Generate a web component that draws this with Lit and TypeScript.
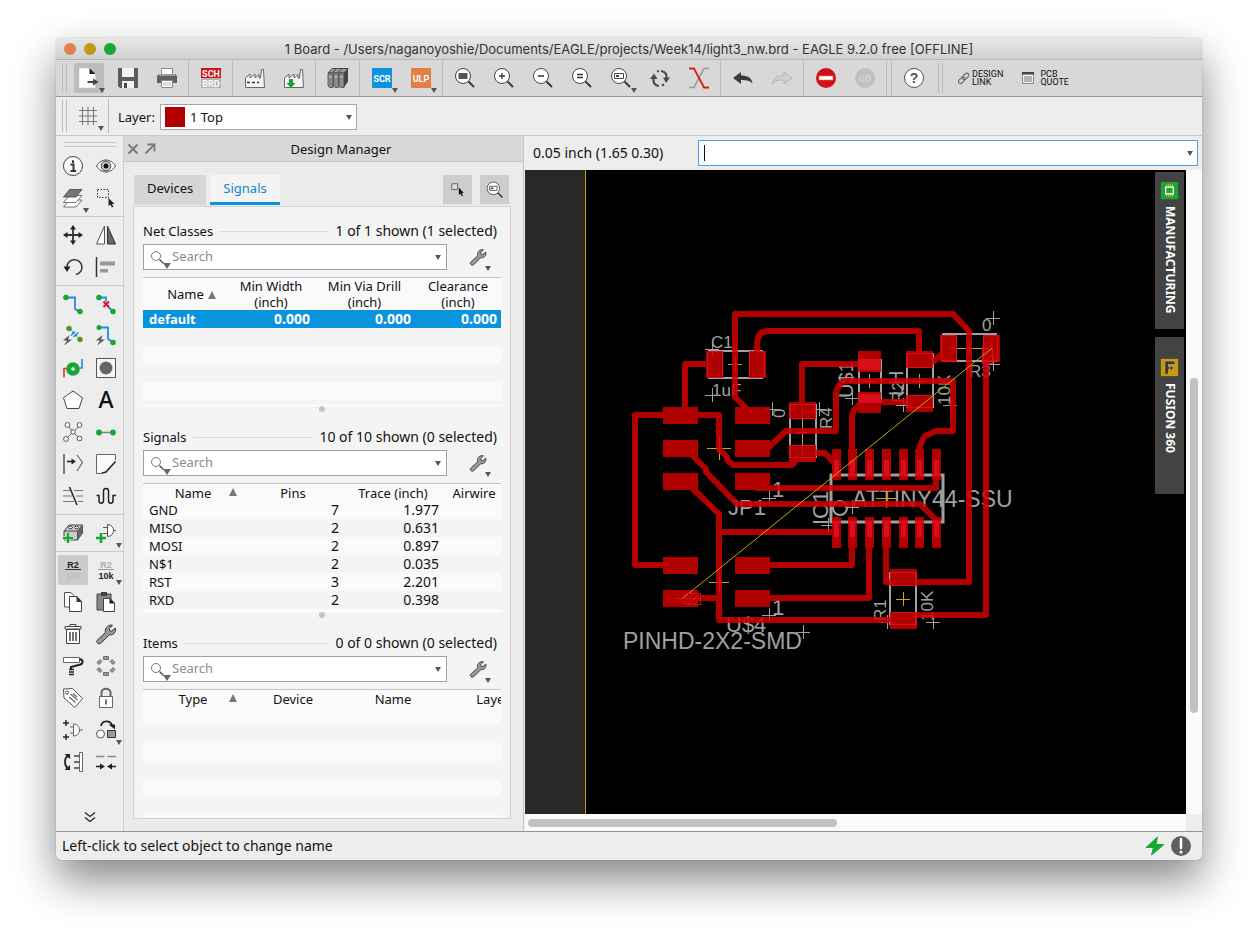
import { LitElement, html, svg, css, nothing } from "lit";
import type { TemplateResult } from "lit";
import { customElement, property } from "lit/decorators.js";
import { classMap } from "lit/directives/class-map.js";

/* ---------- icon set, drawn on a 24 unit grid ---------- */

const lens = (inner: unknown) => svg`
  <circle cx="10" cy="10" r="7.5" fill="#fff" stroke="#444" stroke-width="1"/>
  <path d="M15.500 15.500L21 21" stroke="#333" stroke-width="1.800"/>
  ${inner}`;

const wrench = svg`
  <path d="M3 18.500l8.500-8c-.8-3.500 1.200-7 5.500-7.500l1.500.3-3.200 3.400.4 2 2 .5 3.500-3.200.4 1.200c0 4-3 6.300-6.300 5.600L7.200 21c-1.300 1.200-2.600 1-3.500.2-1-.8-1.500-1.700-.7-2.700z"
    fill="#999" stroke="#333" stroke-width="1"/>`;

const factory = svg`
  <path d="M2.500 21.500V12l4.500-4v4l5-4v4l4-3.500V12h1.500L18.500 3.500h2L21.500 21.500z" fill="#f4f4f4" stroke="#666"/>`;

const ICONS: Record<string, unknown> = {
  open: svg`
    <path d="M2.500 2.500H13L18 8V21.500H2.500z" fill="#fff" stroke="#eee"/>
    <path d="M12.500 2l6 6h-6z" fill="#222"/>
    <path d="M10.500 16h8" stroke="#444" stroke-width="2"/><path d="M16 12.500l5.500 3.500-5.500 3.500z" fill="#444"/>`,
  save: svg`
    <path d="M2 2h20v20H4l-2-2z" fill="#5c5c5c"/><path d="M6 2h12v9H6z" fill="#f3f3f3"/>
    <path d="M6 15h12v7H6z" fill="#f3f3f3"/><path d="M8 17h3v5H8z" fill="#444"/>`,
  print: svg`
    <path d="M6.500 2.500h11v6h-11z" fill="#fff" stroke="#888"/>
    <path d="M4 8h16l2 2v7H2v-7z" fill="#606060"/><path d="M4 8h16v2H4z" fill="#999"/>
    <path d="M6.500 14.500h11v7h-11z" fill="#fff" stroke="#888"/><path d="M8 17h8M8 19h8" stroke="#bbb"/>`,
  sch: svg`
    <path d="M2 2h20v10H2z" fill="#d2101a"/><path d="M2 12h20v10H2z" fill="#b4b4b4"/>
    <text x="12" y="10.500" class="badge">SCH</text><text x="12" y="21" class="badge">BRD</text>`,
  cam: svg`${factory}<path d="M4 16.500h12" stroke="#333" stroke-width="1.500" stroke-dasharray="3 2"/>`,
  mfg: svg`${factory}<path d="M7 13h4v4h2.500L9 22l-4.500-5H7z" fill="#17a535"/>`,
  books: svg`
    <path d="M2 7l4-4.500h16L18 7z" fill="#999" stroke="#444"/>
    <path d="M18 7l4-4.500v13L18 21.500z" fill="#444"/>
    <path d="M2 7h5v14.500H3.500L2 20zM7.500 7h5v14.500H9L7.500 20zM13 7h5v14.500h-3.500L13 20z" fill="#8a8a8a" stroke="#4c4c4c" stroke-width=".8"/>
    <path d="M3 11h3M8.500 11h3M14 11h3" stroke="#ccc"/><path d="M7 6l4-4M12.500 6l4-4" stroke="#444"/>`,
  scr: svg`<path d="M2 2h20v20H2z" fill="#0f93de"/><text x="12" y="15.500" class="badge">SCR</text>`,
  ulp: svg`<path d="M2 2h20v20H2z" fill="#e47e45"/><text x="12" y="15.500" class="badge">ULP</text>`,
  fit: lens(svg`<path d="M5.500 7h9v6h-9z" fill="#555"/>`),
  zin: lens(svg`<path d="M7 10h6M10 7v6" stroke="#333" stroke-width="1.300"/>`),
  zout: lens(svg`<path d="M7 10h6" stroke="#333" stroke-width="1.300"/>`),
  zeq: lens(svg`<path d="M7 8.500h6M7 11.500h6" stroke="#333" stroke-width="1.300"/>`),
  zsel: lens(svg`<path d="M5.500 7.500h9v5h-9z" fill="none" stroke="#444"/><path d="M7 9h3v2H7z" fill="#444"/>`),
  redraw: svg`
    <path d="M13 5c4.500.5 6 3.500 5.500 7M11 20c-4.500-.5-6-3.500-5.500-7" fill="none" stroke="#4a4a4a" stroke-width="2.200"/>
    <path d="M15 11.500h7l-4 5.500z" fill="#4a4a4a"/><path d="M2 13h7.500L6 7.500z" fill="#4a4a4a"/>
    <path d="M9 5.500l2-.5M14 19.500l2-1" stroke="#4a4a4a" stroke-width="2"/>`,
  stackup: svg`
    <path d="M2 21.500h5L17 2.500h5" fill="none" stroke="#999" stroke-width="1.600"/>
    <path d="M2 2.500h5L17 21.500h5" fill="none" stroke="#e01c10" stroke-width="1.800"/>`,
  undo: svg`<path d="M2 12l8-6v3.500c6 0 11 2 11.500 8-2.500-3-6-3.600-11.500-3.500V18z" fill="#3a3a3a"/>`,
  redo: svg`<path d="M22 12l-8-6v3.500c-6 0-11 2-11.500 8 2.500-3 6-3.600 11.500-3.500V18z" fill="#cfcfcf" stroke="#b4b4b4"/>`,
  stop: svg`<circle cx="12" cy="12" r="10" fill="#d0101c"/><path d="M5 10h14v4H5z" fill="#fff" stroke="#e2803a" stroke-width=".6"/>`,
  go: svg`<circle cx="12" cy="12" r="10" fill="#c0c0c0"/><text x="12" y="15.500" class="badge dim">GO</text>`,
  help: svg`<circle cx="12" cy="12" r="9.500" fill="#fff" stroke="#555"/><text x="12" y="17" class="ask">?</text>`,
  link: svg`
    <g fill="none" stroke="#666" stroke-width="1.100" transform="rotate(-45 12 12)">
    <rect x="5" y="10" width="7.500" height="4" rx="2"/><rect x="10.500" y="10" width="7.500" height="4" rx="2"/></g>`,
  quote: svg`
    <path d="M6.500 6.500h11v11h-11z" fill="#eee" stroke="#888"/><path d="M6 6h12v2.500H6z" fill="#444"/>
    <path d="M8 11h8M8 13h8M8 15h8" stroke="#777"/>`,
  grid: svg`<path d="M6.500 3v18M12 3v18M17.500 3v18M3 6.500h18M3 12h18M3 17.500h18" stroke="#777" stroke-width="1"/>`,

  info: svg`<circle cx="12" cy="12" r="9.500" fill="#fafafa" stroke="#444"/>
    <path d="M12 6.300v2.600M9.500 10.500h3v6M9.500 17h5.500" stroke="#333" stroke-width="2" fill="none"/>`,
  eye: svg`<path d="M2.500 12c5-8 14-8 19 0-5 8-14 8-19 0z" fill="#fff" stroke="#444"/>
    <circle cx="12" cy="12" r="4.800" fill="#ccc" stroke="#444"/><circle cx="12" cy="12" r="2.500" fill="#111"/>`,
  layers: svg`<g stroke="#555" stroke-width=".8">
    <path d="M2.500 21l6-7H21l-6 7z" fill="#fff"/><path d="M2.500 16.500l6-7H21l-6 7z" fill="#fff"/><path d="M2.500 11l6-7.500H21L15 11z" fill="#777" stroke="#444"/></g>`,
  group: svg`<path d="M3.500 3.500h11v8h-11z" fill="none" stroke="#333" stroke-dasharray="1.500 1.500"/>
    <path d="M14.500 12v8l2-1.500 1.300 3 1.500-.7-1.300-2.800h2.500z" fill="#222"/>`,
  move: svg`<path d="M12 4v16M4 12h16" stroke="#333" stroke-width="1.800"/>
    <path d="M12 2l3 4.500H9zM12 22l3-4.500H9zM2 12l4.500-3v6zM22 12l-4.500-3v6z" fill="#222"/>`,
  mirror: svg`<path d="M10.500 3v18h-8z" fill="#fff" stroke="#555"/><path d="M13.500 3v18h8z" fill="#666" stroke="#333"/>`,
  rotate: svg`<path d="M6 13a7.500 7.500 0 1 1 9 6.500" fill="none" stroke="#333" stroke-width="1.500"/><path d="M2.500 11.500h7L6 17z" fill="#222"/>`,
  align: svg`<path d="M2.500 2v20" stroke="#333" stroke-width="1.500"/><path d="M6 6.500h15v4H6zM6 14h8v3.500H6z" fill="#999"/>`,
  route: svg`<path d="M5 5.500h9V17l5 3" fill="none" stroke="#1b8fdf" stroke-width="1.800"/>
    <circle cx="5" cy="5.500" r="2.800" fill="#17a535"/><circle cx="19" cy="19.500" r="2.800" fill="#17a535"/>`,
  ripup: svg`<path d="M5 5.500h7v4M14 15l5 4" fill="none" stroke="#1b8fdf" stroke-width="1.800"/>
    <circle cx="5" cy="5.500" r="2.800" fill="#17a535"/><circle cx="19" cy="19.500" r="2.800" fill="#17a535"/>
    <path d="M9.500 9.500l5.500 5.500M15 9.500L9.500 15" stroke="#d8141c" stroke-width="2"/>`,
  autoroute: svg`<path d="M8.500 4.500l10 10.500" stroke="#1b8fdf" stroke-width="1.500" stroke-dasharray="3 1"/>
    <path d="M10 11.500l4-4M12.500 13l5-4.500" stroke="#1b8fdf" stroke-width="1.600"/>
    <circle cx="8" cy="4.500" r="2.500" fill="#17a535" stroke="#c08a20" stroke-width=".8"/><circle cx="19" cy="15.500" r="2.500" fill="#17a535" stroke="#c08a20" stroke-width=".8"/>
    <path d="M8.500 11L2 16.500h4l-3 5 8-6H7z" fill="#555"/>`,
  quickroute: svg`<path d="M5 3.500h9V15l5 3" fill="none" stroke="#1b8fdf" stroke-width="1.800"/>
    <circle cx="5" cy="3.500" r="2.500" fill="#17a535"/><circle cx="19" cy="18.500" r="2.800" fill="#17a535"/>
    <path d="M8.500 11L2 16.500h4l-3 5 8-6H7z" fill="#555"/>`,
  via: svg`<path d="M3 21.500v-9h5" fill="none" stroke="#e2361c" stroke-width="1.600"/><path d="M21 3v9h-5" fill="none" stroke="#1b8fdf" stroke-width="1.600"/>
    <circle cx="12" cy="13" r="4.300" fill="#fff" stroke="#17a535" stroke-width="5"/>`,
  hole: svg`<path d="M2.500 2.500h19v19h-19z" fill="#f6f6f6" stroke="#555"/><circle cx="12" cy="12" r="6.500" fill="#666"/>`,
  polygon: svg`<path d="M12 3l9.500 6.800L18 20.500H6L2.500 9.800z" fill="#fff" stroke="#444"/>`,
  text: svg`<text x="12" y="20" class="big-a">A</text>`,
  ratsnest: svg`<path d="M7 5.500l5 6.500 6.500-6M5 19l7-7 6.500 6.500" fill="none" stroke="#666"/>
    <g fill="#fff" stroke="#555"><circle cx="6.500" cy="5" r="2.400"/><circle cx="18.500" cy="5" r="2.400"/><circle cx="5" cy="19" r="2.400"/><circle cx="18.500" cy="18.500" r="2.400"/><circle cx="12" cy="12" r="2.200"/></g>`,
  airwire: svg`<path d="M5 12.500h14" stroke="#888" stroke-width="1.600"/><circle cx="5" cy="12.500" r="2.900" fill="#17a535"/><circle cx="19" cy="12.500" r="2.900" fill="#17a535"/>`,
  split: svg`<path d="M3 2v20" stroke="#333" stroke-width="1.200"/><path d="M6 9.500h6" stroke="#222" stroke-width="1.600"/><path d="M10.500 6.500l4.500 3-4.500 3z" fill="#222"/>
    <path d="M16 3l5.500 7.500L16 19" fill="none" stroke="#666" stroke-width="1.200"/>`,
  miter: svg`<path d="M21.500 8V2.500h-19v19H8" fill="#fafafa" stroke="#666"/><path d="M8 21l4-1 9.500-10.500" fill="none" stroke="#222" stroke-width="1.500"/>`,
  fanout: svg`<path d="M2 6.500h7M13 6.500h9M2 12h9M15 12h7M2 17.500h11M17 17.500h5" stroke="#777"/><path d="M8.500 3l7.500 18" stroke="#222" stroke-width="1.500"/>`,
  meander: svg`<path d="M2.500 11.500h2.500v5c0 3.500 4.500 3.500 4.500 0V7c0-3.500 5-3.500 5 0v9.500c0 3.500 4.500 3.500 4.500 0v-5H22" fill="none" stroke="#222" stroke-width="1.500"/>`,
  addpart: svg`<path d="M3 10l5-6h13.500v8l-5 7H3z" fill="#ccc" stroke="#444"/><path d="M3 10h13.500l5-6M16.500 10v9" fill="none" stroke="#444"/>
    <path d="M16.500 10l5-6v8l-5 7z" fill="#666"/><ellipse cx="9.500" cy="6.500" rx="2" ry="1.200" fill="#eee" stroke="#444"/><ellipse cx="15.500" cy="6.500" rx="2" ry="1.200" fill="#eee" stroke="#444"/>
    <path d="M7 12v10M2 17h10" stroke="#fff" stroke-width="3.500"/><path d="M7 12v10M2 17h10" stroke="#17a535" stroke-width="2.600"/>`,
  addgate: svg`<path d="M13.500 3.500c8 0 8 12 0 12zM9 6.500h4M9 12.500h4M19.500 9.500H22" fill="#fff" stroke="#555"/>
    <path d="M7 12v10M2 17h10" stroke="#17a535" stroke-width="2.600"/>`,
  name: svg`<text x="12" y="10" class="r2">R2</text><path d="M4 11.500h16" stroke="#333"/><text x="12" y="20.500" class="r2 faint">10k</text>`,
  value: svg`<text x="12" y="10" class="r2 pale">R2</text><path d="M4 11.500h16" stroke="#999"/><text x="12" y="20.500" class="r2">10k</text>`,
  copy: svg`<path d="M3.500 2.500H10l2.500 3V17h-9z" fill="#fff" stroke="#555"/><path d="M8.500 6.500H16l4.500 5v10h-12z" fill="#fff" stroke="#444"/><path d="M15.500 6l5.500 6h-5.500z" fill="#333"/>`,
  paste: svg`<path d="M3 4h14v16H3z" fill="#888" stroke="#444"/><path d="M7 2h6v4H7z" fill="#444"/><path d="M9.500 8.500H16l4.500 4.500v8.500h-11z" fill="#fff" stroke="#444"/><path d="M15.500 8l5.500 5.500h-5.500z" fill="#222"/>`,
  trash: svg`<path d="M5.500 7.500h13v14h-13zM4 4.500h16v2.500H4zM9 4.500v-2h6v2" fill="#fff" stroke="#444"/><path d="M9 10v9M12 10v9M15 10v9" stroke="#444" stroke-width="1.500"/>`,
  wrench,
  roller: svg`<path d="M2.500 3.500h16v5h-16z" fill="#fff" stroke="#666"/><path d="M18.500 5c4 1 4 4 1 5.500L10 13v2" fill="none" stroke="#222" stroke-width="2"/>
    <path d="M8 15.500h5M8 18h5M8 20.500h5" stroke="#222" stroke-width="1.600"/>`,
  optimise: svg`<g fill="#999" stroke="#555" stroke-width=".8"><path d="M9.500 2.500h5V5.500h-5zM9.500 18.500h5v3h-5z"/>
    <path d="M3 8.500l3-3 2 2-3 3zM21 8.500l-3-3-2 2 3 3zM3 15.500l3 3 2-2-3-3zM21 15.500l-3 3-2-2 3-3z"/></g>`,
  tag: svg`<path d="M2.500 3l9-.5 10 10-7.500 9L3 12z" fill="#fff" stroke="#555"/><circle cx="6" cy="6.500" r="1.500" fill="none" stroke="#555"/>
    <path d="M9.500 8l7 6M8 11l6.500 5.500M12 7.500l4 3.500" stroke="#666" stroke-width="1.200"/>`,
  lock: svg`<path d="M7.500 11V6.500c0-5 9-5 9 0V11" fill="none" stroke="#666" stroke-width="2"/><path d="M5.500 10.500h13v11h-13z" fill="#fff" stroke="#666"/><path d="M12 13.500v5" stroke="#444" stroke-width="1.500"/>`,
  gates: svg`<path d="M2 5h6M5 2v6M2 19h6M5 16v6" stroke="#222" stroke-width="1.400"/><path d="M12.500 6c8 0 8 12 0 12zM9 9h3.500M9 15h3.500M18.500 12H22" fill="#fff" stroke="#666"/>`,
  replace: svg`<path d="M7 8c1-6 9-6 11-1" fill="none" stroke="#222" stroke-width="1.800"/><path d="M14.500 6.500h6.500v5z" fill="#222"/>
    <circle cx="6.500" cy="16" r="4" fill="#fff" stroke="#555"/><path d="M13.500 12.500h8v7h-8z" fill="#999" stroke="#333"/>`,
  swap: svg`<path d="M7 5.500c-4 3-4 10 0 13" fill="none" stroke="#222" stroke-width="1.800"/><path d="M3.500 4H9v5zM3.500 20H9v-5z" fill="#222"/>
    <path d="M18.500 2.500h3v19h-3z" fill="#fff" stroke="#666"/><path d="M13 6h5M13 12h5M13 18h5" stroke="#444" stroke-width="1.300"/>`,
  gap: svg`<path d="M2 6.500h8.500M13.500 6.500H22" stroke="#888" stroke-width="1.600"/><path d="M2 16.500h5M17 16.500h5" stroke="#222" stroke-width="1.600"/>
    <path d="M6 13.500l5 3-5 3zM18 13.500l-5 3 5 3z" fill="#222"/>`,
  more: svg`<path d="M7 6.500l5 4 5-4M7 11.500l5 4 5-4" fill="none" stroke="#222" stroke-width="1.300"/>`,
  pick: svg`<path d="M4.500 4.500h7v7h-7z" fill="#ddd" stroke="#555"/><path d="M13 9v9l2-1.700 1.500 3.200 1.500-.7-1.400-3.100H19z" fill="#111"/>`,
  bolt: svg`<path d="M14.500 3L3 13.500h7.500L8.500 21 21 10.500h-8z" fill="#16a832" stroke="#16a832"/>`,
  alert: svg`<circle cx="12" cy="12" r="10" fill="#5f5f5f"/><path d="M12 5v9" stroke="#fff" stroke-width="2.500" stroke-linecap="round"/><circle cx="12" cy="18" r="1.500" fill="#fff"/>`,
  closex: svg`<path d="M7.500 7.500l9 9M16.500 7.500l-9 9" stroke="#777" stroke-width="1.800"/>`,
  popout: svg`<path d="M7.500 16.500L16 8" stroke="#777" stroke-width="1.800"/><path d="M9.500 7.500h7v7" fill="none" stroke="#777" stroke-width="1.800"/>`,
  chip: svg`<path d="M3 3h18v18H3z" fill="#16a832"/><path d="M9 5.500v13M11 5.500v13M13 5.500v13M15 5.500v13" stroke="#e8a020" stroke-width="1.200"/><path d="M8 8.500h8v7H8z" fill="#16a832" stroke="#fff" stroke-width="1.400"/>`,
  fusion: svg`<path d="M3 3h18v18H3z" fill="#c49a10"/><path d="M9 18.500V7h8M9 12.500h6" fill="none" stroke="#333" stroke-width="2.600"/><path d="M12 15V9.500h5" fill="none" stroke="#999" stroke-width="1.200"/>`,
};

const iconStyles = css`
  .icon { display: block; width: 24px; height: 24px; flex: none; }
  .badge { font: 700 9px Roboto, "Liberation Sans", sans-serif; fill: #fff; text-anchor: middle; }
  .badge.dim { fill: #d4d4d4; }
  .ask { font: 700 14px "Liberation Sans", sans-serif; fill: #555; text-anchor: middle; }
  .big-a { font: 500 23px "Noto Sans", sans-serif; fill: #111; text-anchor: middle; }
  .r2 { font: 700 9px "Liberation Sans", sans-serif; fill: #222; text-anchor: middle; }
  .r2.pale { fill: #aaa; }
  .r2.faint { fill: #bbb; }
`;

const icon = (name: string) => html`<svg class="icon" viewBox="0 0 24 24" overflow="visible" aria-hidden="true">${ICONS[name]}</svg>`;

const caret = html`<svg class="caret" viewBox="0 0 6 5" width="6" height="5" aria-hidden="true"><path d="M0 0h6L3 5z" fill="#555"/></svg>`;

const buttonReset = css`
  button { border: 0; padding: 0; margin: 0; background: none; font: inherit; color: inherit; position: relative; }
  .caret { display: block; }
`;

/* ---------- toolbar button ---------- */

@customElement("tool-button")
class ToolButton extends LitElement {
  @property() icon = "";
  @property() label = "";
  @property({ type: Boolean }) menu = false;
  @property({ type: Boolean }) active = false;

  static styles = [iconStyles, buttonReset, css`
    :host { display: grid; place-items: center; }
    button { width: 30px; height: 30px; display: grid; place-items: center; }
    button.active { background: var(--active-bg, #bdbdbd); border-radius: 2px; }
    .caret { position: absolute; right: -1px; bottom: 0; }
  `];

  render() {
    return html`<button aria-label=${this.label} class=${classMap({ active: this.active })}>
      ${icon(this.icon)}${this.menu ? caret : nothing}
    </button>`;
  }
}

/* ---------- design manager table section ---------- */

interface Column { title: string; unit?: string; width: number; sorted?: boolean; }

@customElement("signal-section")
class SignalSection extends LitElement {
  @property() heading = "";
  @property() count = "";
  @property({ attribute: false }) columns: Column[] = [];
  @property({ attribute: false }) rows: string[][] = [];
  @property({ type: Number }) selected = -1;
  @property({ type: Number }) blanks = 0;

  static styles = [iconStyles, buttonReset, css`
    :host { display: flex; flex-direction: column; min-height: 0; }
    .head { display: flex; align-items: center; gap: 7px; height: 18px; margin-bottom: 4px; padding-right: 4px; }
    .count { font-size: 14px; }
    .rule { flex: 1; height: 1px; background: #dadada; }
    .search { display: flex; gap: 16px; align-items: center; margin-bottom: 7px; }
    .box { position: relative; flex: 1; display: flex; }
    .box input { flex: 1; min-width: 0; height: 26px; box-sizing: border-box; border: 1px solid #a0a0a0; background: #fff;
      padding: 0 20px 2px 28px; font: inherit; outline: 0; }
    .box input::placeholder { color: #8c8c8c; opacity: 1; }
    .box .lens { position: absolute; left: 6px; top: 5px; }
    .box .caret { position: absolute; right: 6px; top: 11px; }
    .opts { width: 30px; height: 26px; margin-right: 8px; display: grid; place-items: center; }
    .opts .icon { width: 20px; height: 20px; }
    .opts .caret { position: absolute; right: 2px; bottom: -1px; }
    .view { flex: 1; min-height: 0; overflow: hidden; border-top: 1px solid #c4c4c4; background: #fafafa; border-bottom: 1px solid #fff; }
    table { border-collapse: collapse; table-layout: fixed; width: 100%; }
    th { font-weight: 400; line-height: 16px; padding: 0; white-space: nowrap; position: relative; height: 17px; }
    th.split { height: 31px; }
    th.split.sorted { padding-left: 12px; }
    th .arrow { position: absolute; right: 6px; top: 4px; }
    th.split .arrow { position: static; margin-left: 4px; }
    td { height: 18px; line-height: 18px; padding: 0 4px 0 6px; text-align: right; white-space: nowrap; font-size: 14px; }
    td.left { text-align: left; font-size: 13px; }
    tbody tr:nth-child(even) { background: #f4f4f4; }
    tbody tr.selected { background: #0a94dd; color: #fff; font-weight: 700; }
  `];

  render() {
    const blanks = Array.from({ length: this.blanks });
    return html`
      <div class="head"><label for="q">${this.heading}</label><span class="rule"></span><span class="count">${this.count}</span></div>
      <div class="search">
        <div class="box">
          <svg class="lens" viewBox="0 0 22 20" width="22" height="20" aria-hidden="true">
            <circle cx="7" cy="7" r="4.500" fill="#fff" stroke="#777"/><path d="M10.500 10.500l4 4" stroke="#444" stroke-width="1.200"/>
            <path d="M14 14h8L18 20z" fill="#666"/>
          </svg>
          <input id="q" type="text" placeholder="Search">${caret}
        </div>
        <button class="opts" aria-label="${this.heading} options">${icon("wrench")}${caret}</button>
      </div>
      <div class="view">
        <table>
          <colgroup>${this.columns.map((c) => html`<col style="width:${c.width}px">`)}</colgroup>
          <thead><tr>${this.columns.map((c) => this.header(c))}</tr></thead>
          <tbody>
            ${this.rows.map((r, i) => html`<tr class=${classMap({ selected: i === this.selected })}>
              ${this.columns.map((c, j) => html`<td class=${j === 0 ? "left" : ""}>${r[j] ?? ""}</td>`)}</tr>`)}
            ${blanks.map(() => html`<tr>${this.columns.map(() => html`<td></td>`)}</tr>`)}
          </tbody>
        </table>
      </div>`;
  }

  private header(c: Column): TemplateResult {
    const split = this.columns.some((k) => k.unit);
    return html`<th class=${classMap({ split, sorted: !!c.sorted })}>${c.title}${c.unit ? html`<br>${c.unit}` : nothing}${c.sorted
      ? html`<svg class="arrow" viewBox="0 0 8 8" width="8" height="8" aria-hidden="true"><path d="M0 8h8L4 0z" fill="#777"/></svg>` : nothing}</th>`;
  }
}

/* ---------- board drawing ---------- */

const TRACES = [
  "M715 364H685V415", "M680 415H635V565H680",
  "M680 415H719V449L727 457V460L733 465H792L800 457",
  "M750 412L735 397V314H953L969 331V582H903",
  "M757 364V345Q757 331 769 331H919V360", "M802 410V364H870",
  "M765 451L786 431H836V394Q838 381 848 381H953V431H936L925 436Q919 444 919 455",
  "M915 402H862L854 410L852 416V460", "M802 453H825L836 465", "M925 361H934L946 350",
  "M986 350V615H903", "M688 451L706 469V472L737 504H920L936 520",
  "M688 484L719 514V620H903", "M719 532H836", "M757 488H936V470",
  "M752 565H852V540", "M752 598H869V540", "M682 598H719", "M886 540V582H903",
];

const PADS: number[][] = [
  ...[407, 440, 473, 557, 590].flatMap((y) => [[663, y, 35, 17], [735, y, 35, 17]]),
  [706, 351, 17, 27], [749, 351, 17, 27],
  [789, 402, 27, 17], [789, 445, 27, 17],
  [858, 351, 23, 21], [858, 392, 23, 21],
  [906, 351, 27, 17], [906, 395, 27, 17],
  [940, 335, 17, 27], [983, 335, 17, 27],
  [890, 569, 27, 17], [890, 612, 27, 17],
];

const PINS = [836, 852, 869, 886, 903, 919, 936];

/* x, baseline y, size, text, rotated */
const LABELS: [number, number, number, string, boolean][] = [
  [623, 649, 23, "PINHD-2X2-SMD", false], [852, 507, 23, "ATTINY44-SSU", false],
  [728, 515, 22, "JP1", false], [772, 497, 22, "1", false], [772, 615, 22, "1", false],
  [726, 632, 22, "U$4", false], [711, 348, 17, "C1", false], [712, 396, 17, "1uF", false],
  [982, 331, 17, "0", false], [969, 377, 17, "R3", false],
  [785, 418, 17, "0", true], [832, 429, 17, "R4", true], [853, 398, 20, "U$1", true],
  [828, 525, 22, "IC1", true], [904, 403, 17, "R2", true], [903, 396, 20, "LH", true],
  [950, 405, 17, "10K", true], [886, 621, 17, "R1", true], [933, 621, 17, "10K", true],
];

const MARKS = [[712, 349], [712, 395], [772, 409], [819, 409], [769, 498], [769, 615], [803, 632], [852, 398],
  [903, 405], [950, 405], [993, 318], [993, 364], [852, 507], [828, 525], [887, 622], [933, 622]];

const ORIGINS = [[735, 364, 7, 7], [802, 432, 7, 22], [719, 448, 12, 12], [719, 582, 10, 10], [869, 381, 7, 7],
  [919, 381, 7, 7], [969, 348, 20, 7], [886, 498, 10, 10], [903, 599, 7, 7]];

const cross = ([x, y, w = 7, h = 7]: number[]) => `M${x - w} ${y + 0.5}h${2 * w}M${x + 0.5} ${y - h}v${2 * h}`;

@customElement("board-canvas")
class BoardCanvas extends LitElement {
  static styles = css`
    :host { display: block; background: #000; overflow: hidden; }
    svg { display: block; width: 100%; height: 100%; }
    .silk { color: #a0a0a0; }
    .copper { color: #b00000; }
    .bright { color: #d80e1c; }
    .yellow { color: #c8a60c; }
    .solid { color: #fff; }
    text { font-family: "Liberation Sans", Arial, sans-serif; fill: currentColor; }
  `;

  render() {
    return html`<svg viewBox="525 170 661 644" preserveAspectRatio="xMinYMin slice" role="img" aria-label="Board layout">
      <rect x="525" y="170" width="60" height="2000" fill="#282828"/>
      <rect x="585" y="170" width="1" height="2000" fill="#c09a10"/>
      <g class="silk"><g id="silk" fill="none" stroke="none">
        ${LABELS.map(([x, y, s, t, r]) => svg`<text x=${x} y=${y} font-size=${s} transform=${r ? `rotate(-90 ${x} ${y})` : "rotate(0)"}>${t}</text>`)}
        <g stroke="currentColor" stroke-width="2">
          <path d="M708 351h55M708 378h55M790 404v54M816 404v54M859 359v44M881 359v44M907 353v55M933 353v55M942 334h55M942 361h55M890 572v53M916 572v53"/>
          <path d="M831 475h112v47H831z" stroke-width="3"/><circle cx="840" cy="508" r="7"/>
          <path d=${MARKS.map(cross).join("")} stroke-width="1"/>
        </g>
        <g fill="currentColor">
          <path d="M859 359h22v11h-22zM859 394h22v9h-22z"/>
          ${PINS.map((x) => svg`<path d=${`M${x - 2} 460h5v15h-5zM${x - 2} 523h5v14h-5z`}/>`)}
        </g>
        <g stroke="currentColor" stroke-width="1">
          <path d="M707.500 351.500h15v26h-15zM749.500 351.500h15v26h-15zM790.500 404.500h25v14h-25zM790.500 445.500h25v12h-25zM907.500 353.500h25v14h-25zM907.500 395.500h25v12h-25zM941.500 335.500h15v26h-15zM983.500 335.500h14v26h-14zM890.500 572.500h26v13h-26zM890.500 612.500h26v12h-26z"/>
        </g>
      </g></g>
      <g class="yellow"><path id="origins" d=${ORIGINS.map(cross).join("")} stroke="currentColor" stroke-width="1" fill="none"/></g>
      <g class="copper"><g id="copper">
        <path d=${TRACES.join("")} fill="none" stroke="currentColor" stroke-width="6" stroke-linecap="round" stroke-linejoin="round"/>
        <g fill="currentColor">
          ${PADS.map(([x, y, w, h]) => svg`<rect x=${x} y=${y} width=${w} height=${h}/>`)}
          ${PINS.map((x) => svg`<path d=${`M${x - 4} 449h9v31h-9zM${x - 4} 517h9v31h-9z`}/>`)}
        </g>
      </g></g>
      <mask id="over"><use href="#copper" class="solid"/></mask>
      <g mask="url(#over)"><use href="#silk" class="bright"/><use href="#origins" class="bright"/></g>
      <path d="M992 348L683 598" stroke="#c8a60c" stroke-width="1"/>
      <g stroke="#d80e1c" fill="none">
        <path d="M700.500 593.500h-13a6 5.500 0 0 0 0 11h13zM684 603l9-9M689 604l10-10M694 604l6-6M675 598.500h26"/>
        <path d="M982.500 363.500v-15a5 6 0 0 1 10 0v15zM983 352l8-7M983 358l9-9M983 363l9-8"/>
      </g>
    </svg>`;
  }
}

/* ---------- window ---------- */

type Tool = [name: string, label: string, menu?: boolean, active?: boolean] | "|";

const MAIN_TOOLS: Tool[] = [
  ["open", "Open", true, true], ["save", "Save"], ["print", "Print"], "|",
  ["sch", "Switch to schematic"], "|", ["cam", "CAM processor"], ["mfg", "Manufacturing output"], "|",
  ["books", "Library"], "|", ["scr", "Run script", true], ["ulp", "Run ULP", true], "|",
  ["fit", "Zoom to fit"], ["zin", "Zoom in"], ["zout", "Zoom out"], ["zeq", "Zoom reset"], ["zsel", "Zoom select", true],
  ["redraw", "Redraw"], ["stackup", "Layer stack"], "|", ["undo", "Undo"], ["redo", "Redo"], "|",
  ["stop", "Stop"], ["go", "Go"], "|", "|", ["help", "Help"],
];

const PALETTE: Tool[][] = [
  [["info", "Info"], ["eye", "Show"], ["layers", "Layers", true], ["group", "Group"]],
  [["move", "Move"], ["mirror", "Mirror"], ["rotate", "Rotate"], ["align", "Align"]],
  [["route", "Route"], ["ripup", "Ripup"], ["autoroute", "Autoroute"], ["quickroute", "Quick route"], ["via", "Via"], ["hole", "Hole"],
    ["polygon", "Polygon"], ["text", "Text"], ["ratsnest", "Ratsnest"], ["airwire", "Airwire"], ["split", "Split"], ["miter", "Miter"],
    ["fanout", "Fanout"], ["meander", "Meander"]],
  [["addpart", "Add part"], ["addgate", "Add gate", true]],
  [["name", "Name", false, true], ["value", "Value", true], ["copy", "Copy"], ["paste", "Paste"], ["trash", "Delete"], ["wrench", "Change"],
    ["roller", "Paint roller"], ["optimise", "Optimize"], ["tag", "Attribute"], ["lock", "Lock"], ["gates", "Gate swap"],
    ["replace", "Replace", true], ["swap", "Pin swap"], ["gap", "Slice"]],
];

const tool = (t: Tool) => t === "|"
  ? html`<span class="sep"></span>`
  : html`<tool-button icon=${t[0]} label=${t[1]} ?menu=${!!t[2]} ?active=${!!t[3]}></tool-button>`;

@customElement("app-root")
class AppRoot extends LitElement {
  static styles = [iconStyles, buttonReset, css`
    :host { display: flex; box-sizing: border-box; min-height: 100vh; padding: 38px 56px 74px; background: #fff;
      font: 13px/18px "Noto Sans", "Open Sans", sans-serif; color: #111; }
    .window { flex: 1; min-width: 0; display: flex; flex-direction: column; background: #ededed; border-radius: 5px; overflow: hidden;
      box-shadow: 0 0 1px rgba(0,0,0,.5), 0 20px 44px rgba(0,0,0,.48); }
    .title { position: relative; display: flex; align-items: center; justify-content: center; height: 21px; border-bottom: 1px solid #b4b6b6;
      background: linear-gradient(#e6e7e7, #cfd1d1); font: 13px/20px Inter, Roboto, sans-serif; color: #333; }
    .title h1 { margin: 0; font: inherit; }
    .lights { position: absolute; left: 8px; display: flex; gap: 8px; }
    .lights button { width: 12px; height: 12px; border-radius: 50%; }
    .red { background: #e5804d; } .amber { background: #bf9a16; } .green { background: #16a832; }

    .bar { display: flex; align-items: stretch; padding-left: 1px; }
    .main-bar { height: 36px; background: #d8d8d8; border-bottom: 1px solid #979797; }
    .main-bar tool-button { width: 39px; }
    .grip { box-sizing: border-box; width: 5px; margin: 3px 2px 3px 5px; border: solid #bcbcbc; border-width: 0 1px; }
    .sep { width: 1px; margin: 0 2px; background: #bcbcbc; }
    .text-tool { display: flex; align-items: center; font: 9px/8px Roboto, "Noto Sans", sans-serif; text-align: left; margin-right: 19px; }
    .text-tool .icon { margin-left: -6px; }
    .text-tool:first-child .icon { margin-right: -4px; }
    .links { display: flex; padding-left: 13px; }
    .layer-bar { height: 38px; border-bottom: 1px solid #c9c9c9; align-items: center; }
    .layer-bar .grip { align-self: stretch; }
    .layer-bar tool-button { width: 37px; }
    .layer-bar .sep { align-self: stretch; margin: 2px 9px 2px 2px; }
    .layer { display: flex; align-items: center; gap: 5px; padding-top: 2px; }
    .layer select { appearance: none; width: 197px; height: 26px; border: 1px solid #a6a6a6; border-radius: 0; background: #fff; padding: 0 0 0 29px; font: inherit; color: inherit; }
    .combo { position: relative; display: flex; }
    .combo .caret { position: absolute; right: 5px; top: 11px; }
    .swatch { position: absolute; left: 5px; top: 3px; width: 20px; height: 20px; background: #b00000; }

    .body { flex: 1; min-height: 0; display: flex; }
    .palette { width: 67px; border-right: 1px solid #cfcfcf; display: flex; flex-direction: column; --active-bg: #cbcbcb; }
    .palette .top { box-sizing: border-box; height: 5px; margin: 6px 7px 3px 8px; border: solid #c4c4c4; border-width: 1px 0; }
    .set { display: grid; grid-template-columns: 33px 33px; grid-auto-rows: 32px; }
    .set + .set { border-top: 1px solid #c9c9c9; margin-top: 2px; padding-top: 2px; }
    .more { margin: auto auto 1px; }

    .manager { width: 399px; display: flex; flex-direction: column; border-right: 1px solid #c9c9c9; background: #ebebeb; }
    .dock { display: flex; align-items: center; height: 25px; background: #d8d8d8; border-bottom: 1px solid #c6c6c6; padding-left: 1px; }
    .dock h2 { flex: 1; margin: 0; font: inherit; text-align: center; }
    .dock button { width: 17px; }
    .dock .icon { margin: 0 -4px; }
    .tabs { display: flex; gap: 4px; padding: 13px 14px 0 10px; height: 31px; align-items: flex-start; }
    .tabs button.tab { height: 30px; padding: 0 13px 4px; background: #d6d6d6; box-sizing: border-box; }
    .tabs button.tab.on { background: #f4f4f4; color: #0a86d4; border-bottom: 3px solid #0f93de; padding-bottom: 1px; }
    .tabs .fill { flex: 1; }
    .tabs .aux { width: 29px; height: 29px; background: #cdcdcd; display: grid; place-items: center; }
    .tabs .aux + .aux { margin-left: 4px; }
    .tabs .aux .icon { width: 20px; height: 20px; }
    .sheet { flex: 1; min-height: 0; margin: 0 12px 12px 9px; border: 1px solid #d2d2d2; background: #f4f4f4; padding: 15px 9px 1px;
      display: flex; flex-direction: column; }
    .sheet signal-section { flex: 0 0 184px; }
    .sheet signal-section:last-child { flex: 1 1 180px; }
    .split { height: 22px; display: grid; justify-items: center; }
    .split::before { content: ""; width: 6px; height: 6px; border-radius: 50%; background: #c6c6c6; }

    .work { flex: 1; min-width: 0; display: flex; flex-direction: column; padding-left: 1px; }
    .command { display: flex; align-items: center; gap: 32px; padding: 0 4px 0 8px; height: 34px; font-size: 14px; }
    .command label { min-width: 133px; }
    .command .entry { flex: 1; position: relative; display: flex; }
    .command input { flex: 1; height: 26px; box-sizing: border-box; border: 1px solid #539fdc; background: #fff; padding: 0 20px 0 5px; font: inherit; outline: 0; }
    .command .caret { position: absolute; right: 5px; top: 11px; }
    .command .cursor { position: absolute; left: 6px; top: 5px; width: 1px; height: 16px; background: #111; }
    .view { flex: 1; min-height: 0; display: grid; grid-template: minmax(0, 1fr) 17px / minmax(0, 1fr) 16px; }
    .canvas { position: relative; display: grid; min-height: 0; background: #000; }
    .side { position: absolute; top: 2px; right: 2px; display: grid; gap: 8px; }
    .side button { writing-mode: vertical-rl; width: 29px; height: 157px; background: #434343; color: #fff; font-weight: 700; font-size: 12px;
      display: flex; align-items: center; justify-content: center; gap: 4px; padding-bottom: 8px; box-sizing: border-box; }
    .side button + button { padding-bottom: 22px; }
    .side .icon { width: 23px; height: 23px; }
    .vbar, .hbar { background: #fafafa; display: grid; }
    .vbar { grid-template-rows: 208fr 335fr 101fr; padding: 0 4px; }
    .vbar span { grid-row: 2; background: #c1c1c1; border-radius: 4px; }
    .hbar { grid-template-columns: 309fr 349fr; padding: 5px 0 4px 3px; }
    .hbar span { background: #c1c1c1; border-radius: 4px; }
    .status { display: flex; align-items: center; height: 28px; border-top: 1px solid #949494; padding: 0 9px 0 6px; font-size: 14px; }
    .status p { flex: 1; margin: 0; }
    .status .icon + .icon { margin-left: 2px; }
  `];

  render() {
    return html`
      <div class="window">
        <header class="title">
          <div class="lights">
            <button class="red" aria-label="Close"></button><button class="amber" aria-label="Minimize"></button><button class="green" aria-label="Zoom"></button>
          </div>
          <h1>1 Board - /Users/naganoyoshie/Documents/EAGLE/projects/Week14/light3_nw.brd - EAGLE 9.2.0 free [OFFLINE]</h1>
        </header>

        <nav class="bar main-bar">
          <span class="grip"></span>
          ${MAIN_TOOLS.map(tool)}
          <span class="grip"></span>
          <div class="links">
            <button class="text-tool">${icon("link")}<span>DESIGN<br>LINK</span></button>
            <button class="text-tool">${icon("quote")}<span>PCB<br>QUOTE</span></button>
          </div>
        </nav>

        <div class="bar layer-bar">
          <span class="grip"></span>
          <tool-button icon="grid" label="Grid" menu></tool-button>
          <span class="sep"></span>
          <div class="layer">
            <label for="layer">Layer:</label>
            <div class="combo">
              <select id="layer"><option>1 Top</option></select><span class="swatch"></span>${caret}
            </div>
          </div>
        </div>

        <main class="body">
          <nav class="palette">
            <span class="top"></span>
            ${PALETTE.map((set) => html`<div class="set">${set.map(tool)}</div>`)}
            <button class="more" aria-label="More tools">${icon("more")}</button>
          </nav>

          <section class="manager">
            <div class="dock">
              <button aria-label="Close panel">${icon("closex")}</button><button aria-label="Detach panel">${icon("popout")}</button>
              <h2>Design Manager</h2>
            </div>
            <div class="tabs">
              <button class="tab">Devices</button><button class="tab on">Signals</button>
              <span class="fill"></span>
              <button class="aux" aria-label="Select on board">${icon("pick")}</button><button class="aux" aria-label="Zoom to selection">${icon("zsel")}</button>
            </div>
            <div class="sheet">
              <signal-section heading="Net Classes" count="1 of 1 shown (1 selected)" selected="0" blanks="5"
                .columns=${[{ title: "Name", width: 85, sorted: true }, { title: "Min Width", unit: "(inch)", width: 86 },
                  { title: "Min Via Drill", unit: "(inch)", width: 101 }, { title: "Clearance", unit: "(inch)", width: 86 }]}
                .rows=${[["default", "0.000", "0.000", "0.000"]]}></signal-section>
              <div class="split"></div>
              <signal-section heading="Signals" count="10 of 10 shown (0 selected)"
                .columns=${[{ title: "Name", width: 100, sorted: true }, { title: "Pins", width: 100 },
                  { title: "Trace (inch)", width: 100 }, { title: "Airwire", width: 62 }]}
                .rows=${[["GND", "7", "1.977"], ["MISO", "2", "0.631"], ["MOSI", "2", "0.897"], ["N$1", "2", "0.035"], ["RST", "3", "2.201"], ["RXD", "2", "0.398"]]}></signal-section>
              <div class="split"></div>
              <signal-section heading="Items" count="0 of 0 shown (0 selected)" blanks="7"
                .columns=${[{ title: "Type", width: 100, sorted: true }, { title: "Device", width: 100 },
                  { title: "Name", width: 100 }, { title: "Layer", width: 100 }]}></signal-section>
            </div>
          </section>

          <section class="work">
            <div class="command">
              <label for="cmd">0.05 inch (1.65 0.30)</label>
              <div class="entry"><input id="cmd" type="text"><span class="cursor"></span>${caret}</div>
            </div>
            <div class="view">
              <div class="canvas">
                <board-canvas></board-canvas>
                <div class="side">
                  <button>${icon("chip")}MANUFACTURING</button>
                  <button>${icon("fusion")}FUSION 360</button>
                </div>
              </div>
              <div class="vbar"><span></span></div>
              <div class="hbar"><span></span></div>
            </div>
          </section>
        </main>

        <footer class="status"><p>Left-click to select object to change name</p>${icon("bolt")}${icon("alert")}</footer>
      </div>`;
  }
}
